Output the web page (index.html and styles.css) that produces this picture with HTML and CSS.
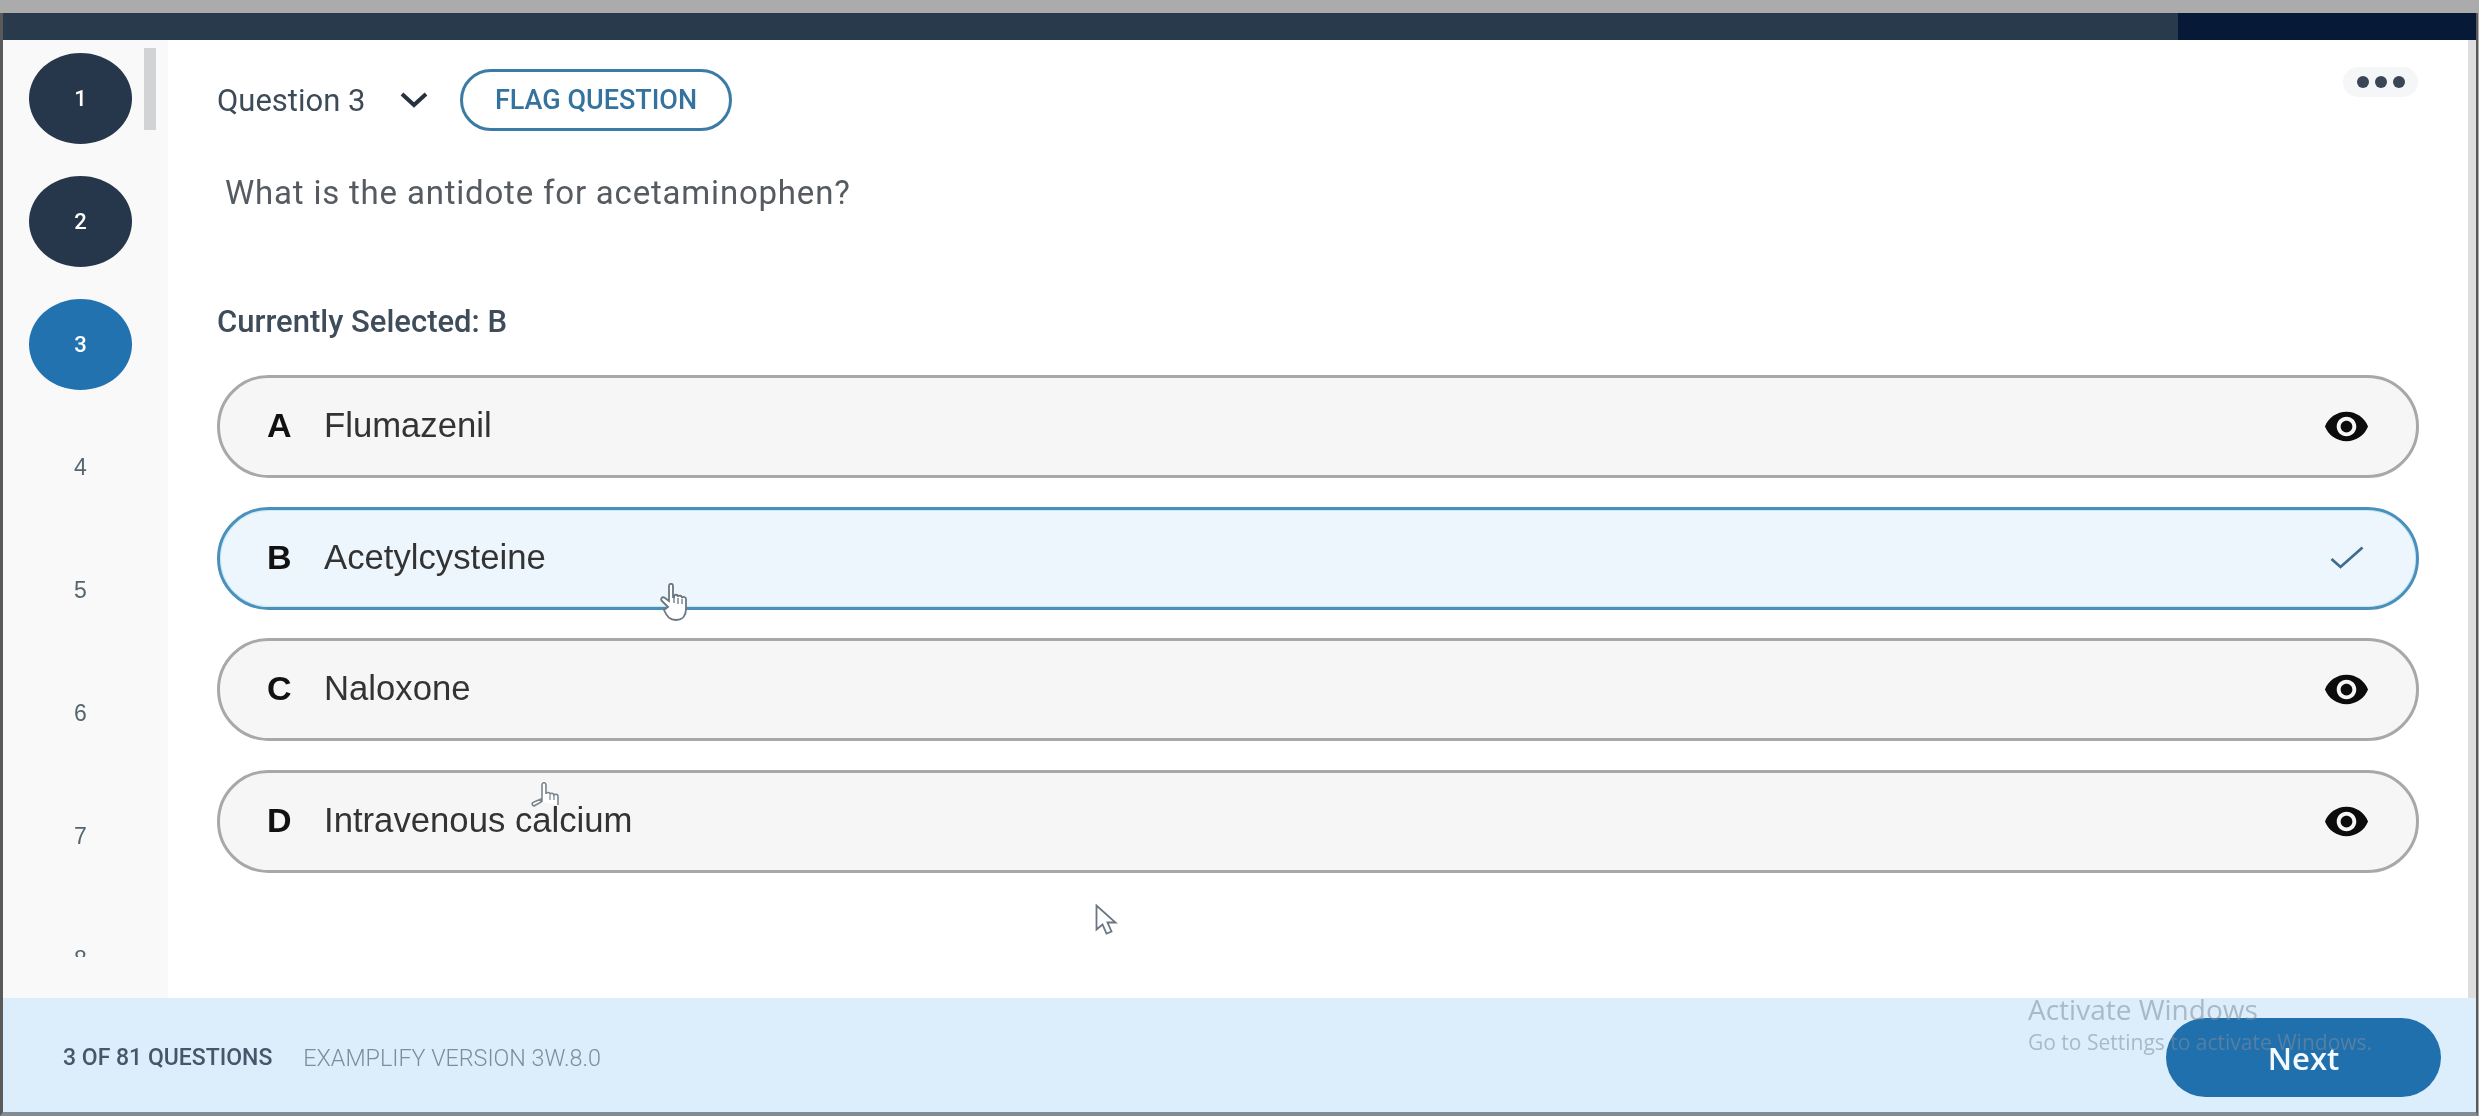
FILE: index.html
```html
<!DOCTYPE html>
<html lang="en">
<head>
    <meta charset="UTF-8">
    <meta name="viewport" content="width=device-width, initial-scale=1.0">
    <title>Examplify</title>
    <link rel="stylesheet" href="styles.css">
</head>
<body>
    <div class="window">
        <div class="top-bar"><div class="top-bar-end"></div></div>
        <div class="main">
            <aside class="sidebar">
                <div class="scroll-thumb"></div>
                <ul class="question-nav">
                    <li class="nav-item done"><span>1</span></li>
                    <li class="nav-item done"><span>2</span></li>
                    <li class="nav-item current"><span>3</span></li>
                    <li class="nav-item"><span>4</span></li>
                    <li class="nav-item"><span>5</span></li>
                    <li class="nav-item"><span>6</span></li>
                    <li class="nav-item"><span>7</span></li>
                    <li class="nav-item"><span>8</span></li>
                </ul>
            </aside>
            <main class="content">
                <div class="question-head">
                    <span class="question-label">Question 3</span>
                    <svg class="chevron" viewBox="0 0 28 16"><path d="M2 2l12 11L26 2" fill="none" stroke="#26323f" stroke-width="4"/></svg>
                    <button class="flag-button">FLAG QUESTION</button>
                    <button class="more-button"><i></i><i></i><i></i></button>
                </div>
                <p class="question-text">What is the antidote for acetaminophen?</p>
                <p class="selected-text">Currently Selected: B</p>
                <div class="options">
                    <div class="option">
                        <span class="option-letter">A</span>
                        <span class="option-text">Flumazenil</span>
                        <svg class="eye" viewBox="0 0 24 24"><path d="M12 4.5C7 4.5 2.73 7.61 1 12c1.73 4.39 6 7.5 11 7.5s9.27-3.11 11-7.5c-1.73-4.39-6-7.5-11-7.5zM12 17c-2.76 0-5-2.24-5-5s2.24-5 5-5 5 2.24 5 5-2.24 5-5 5zm0-8c-1.66 0-3 1.34-3 3s1.34 3 3 3 3-1.34 3-3-1.34-3-3-3z"/></svg>
                    </div>
                    <div class="option selected">
                        <span class="option-letter">B</span>
                        <span class="option-text">Acetylcysteine</span>
                        <svg class="check" viewBox="0 0 34 23"><path d="M1.5 13l9 8L32.500 1.500" fill="none" stroke="#3d6e90" stroke-width="2.800"/></svg>
                    </div>
                    <div class="option">
                        <span class="option-letter">C</span>
                        <span class="option-text">Naloxone</span>
                        <svg class="eye" viewBox="0 0 24 24"><path d="M12 4.5C7 4.5 2.73 7.61 1 12c1.73 4.39 6 7.5 11 7.5s9.27-3.11 11-7.5c-1.73-4.39-6-7.5-11-7.5zM12 17c-2.76 0-5-2.24-5-5s2.24-5 5-5 5 2.24 5 5-2.24 5-5 5zm0-8c-1.66 0-3 1.34-3 3s1.34 3 3 3 3-1.34 3-3-1.34-3-3-3z"/></svg>
                    </div>
                    <div class="option">
                        <span class="option-letter">D</span>
                        <span class="option-text">Intravenous calcium</span>
                        <svg class="eye" viewBox="0 0 24 24"><path d="M12 4.5C7 4.5 2.73 7.61 1 12c1.73 4.39 6 7.5 11 7.5s9.27-3.11 11-7.5c-1.73-4.39-6-7.5-11-7.5zM12 17c-2.76 0-5-2.24-5-5s2.24-5 5-5 5 2.24 5 5-2.24 5-5 5zm0-8c-1.66 0-3 1.34-3 3s1.34 3 3 3 3-1.34 3-3-1.34-3-3-3z"/></svg>
                    </div>
                </div>
            </main>
            <div class="page-scrollbar"></div>
        </div>
        <footer class="footer">
            <span class="footer-count">3 OF 81 QUESTIONS</span>
            <span class="footer-version">EXAMPLIFY VERSION 3W.8.0</span>
            <button class="next-button">Next</button>
            <div class="watermark">
                <div class="watermark-title">Activate Windows</div>
                <div class="watermark-sub">Go to Settings to activate Windows.</div>
            </div>
        </footer>

        <!-- mouse pointers caught in the screen recording -->
        <svg class="cursor hand-one" viewBox="0 0 32 38"><path d="M9 24L3 18c-2-2 0-5 3-3l4 3V3c0-3 4-3 4 0v11l1 0c0-3 4-3 4 0c0-2 4-2 4 1c1-2 4-1 4 1v10c0 6-3 11-10 11c-6 0-9-3-12-10z" fill="#fff" stroke="#6b7680" stroke-width="1.800"/><path d="M15 14v6M19 15v6M23 16v5" stroke="#6b7680" stroke-width="1.300"/></svg>
        <svg class="cursor hand-two" viewBox="0 0 33 26"><path d="M11 17L4 20c-3 1-2 3 0 4l7-4zM12 20V3c0-3 4-3 4 0v9c0-2 4-2 4 0c0-1 4-1 4 1c1-1 4-1 4 1v9" fill="#fff" stroke="#7b858e" stroke-width="1.600"/><path d="M20 12v6M24 13v5" stroke="#7b858e" stroke-width="1.200"/></svg>
        <svg class="cursor arrow" viewBox="0 0 23 31"><path d="M1.500 1.500v24l6-5 4 9 5-2-4-9h8z" fill="#fff" stroke="#6b7680" stroke-width="1.800"/></svg>
    </div>
</body>
</html>
```

FILE: styles.css
```css
* {
    box-sizing: border-box;
}

body {
    margin: 0;
    height: 1116px;
    padding: 13px 1px 0 0;
    overflow: hidden;
    background-color: #ababab;
    font-family: 'Roboto', sans-serif;
}

.window {
    position: relative;
    display: flex;
    flex-direction: column;
    height: 1103px;
    background-color: #ffffff;
    border-left: 3px solid #5a5a5a;
    border-right: 2px solid #5a5a5a;
    border-bottom: 4px solid #7f8c96;
    filter: blur(0.7px);
}

.top-bar {
    display: flex;
    justify-content: flex-end;
    height: 27px;
    background-color: #2a3a4d;
}

.top-bar-end {
    width: 298px;
    background-color: #061a38;
}

.main {
    flex: 1;
    display: flex;
    min-height: 0;
}

/* left question list */
.sidebar {
    position: relative;
    width: 165px;
    padding-top: 13px;
    background-color: #f9f9fa;
}

.scroll-thumb {
    position: absolute;
    top: 8px;
    left: 141px;
    width: 12px;
    height: 82px;
    background-color: #d2d3d5;
}

.question-nav {
    list-style: none;
    display: flex;
    flex-direction: column;
    gap: 32px;
    height: 904px;
    margin: 0;
    padding: 0 0 0 26px;
    overflow: hidden;
}

.nav-item {
    flex: none;
    display: flex;
    align-items: center;
    justify-content: center;
    width: 103px;
    height: 91px;
    border-radius: 50%;
    color: #56666f;
    font-family: 'Liberation Sans', Arial, sans-serif;
    font-size: 23px;
}

.nav-item.done {
    background-color: #26374b;
    color: #ffffff;
    font-family: 'Roboto', sans-serif;
    font-size: 22px;
    font-weight: 500;
}

.nav-item.current {
    background-color: #2272b0;
    color: #ffffff;
    font-family: 'Roboto', sans-serif;
    font-size: 22px;
    font-weight: 500;
}

/* question area */
.content {
    flex: 1;
    padding: 29px 49px 0;
}

.question-head {
    display: flex;
    align-items: center;
    height: 62px;
}

.question-label {
    width: 183px;
    color: #3d4a57;
    font-size: 31px;
}

.chevron {
    width: 28px;
    height: 16px;
}

.flag-button {
    width: 272px;
    height: 62px;
    margin-left: 32px;
    padding: 0;
    background-color: #ffffff;
    border: 3px solid #3b7ba5;
    border-radius: 31px;
    color: #35739f;
    font-family: 'Roboto', sans-serif;
    font-size: 27px;
    font-weight: 500;
}

.more-button {
    display: flex;
    align-items: center;
    justify-content: center;
    gap: 6px;
    width: 75px;
    height: 30px;
    margin: -37px 1px 0 auto;
    padding: 0;
    background-color: #f5f6f8;
    border: none;
    border-radius: 15px;
}

.more-button i {
    width: 12px;
    height: 12px;
    background-color: #3a4655;
    border-radius: 50%;
}

.question-text {
    height: 34px;
    margin: 45px 0 0 8px;
    color: #555b60;
    font-size: 33px;
    line-height: 34px;
    letter-spacing: 0.8px;
}

.selected-text {
    height: 34px;
    margin: 95px 0 0;
    color: #3f4d5a;
    font-size: 31px;
    font-weight: 500;
    line-height: 34px;
}

.options {
    display: flex;
    flex-direction: column;
    gap: 28.5px;
    margin-top: 36px;
}

.option {
    display: flex;
    align-items: center;
    height: 103px;
    padding: 0 46px 2px 47px;
    background-color: #f6f6f6;
    border: 3px solid #a8a8a8;
    border-radius: 52px;
    font-family: 'Liberation Sans', Arial, sans-serif;
}

.option.selected {
    background-color: #eef6fd;
    border-color: #4b90bb;
    box-shadow: inset 0 0 0 1px #c4e8f8;
}

.option-letter {
    width: 57px;
    color: #111111;
    font-size: 34px;
    font-weight: bold;
}

.option-text {
    flex: 1;
    color: #333333;
    font-size: 34.7px;
}

.eye {
    width: 47px;
    height: 47px;
    margin-top: 2px;
    fill: #0c0c0c;
}

.check {
    width: 34px;
    height: 23px;
    margin-right: 6px;
}

.page-scrollbar {
    width: 8px;
    background-color: #dedede;
}

/* bottom bar */
.footer {
    position: relative;
    display: flex;
    align-items: center;
    height: 114px;
    padding: 5px 35px 0 60px;
    background-color: #dcedfc;
}

.footer-count {
    color: #44586a;
    font-size: 23px;
    font-weight: 500;
}

.footer-version {
    margin-left: 31px;
    color: #7f8d9a;
    font-size: 23.300px;
    font-weight: 300;
}

.next-button {
    width: 275px;
    height: 79px;
    margin-left: auto;
    padding: 0;
    background-color: #1f70ad;
    border: none;
    border-radius: 40px;
    color: #f4f9fc;
    font-family: 'Open Sans', sans-serif;
    font-size: 31px;
    font-weight: 600;
}

.watermark {
    position: absolute;
    top: -8px;
    left: 2025px;
    color: rgba(130, 140, 155, 0.55);
    font-family: 'Open Sans', sans-serif;
    white-space: nowrap;
}

.watermark-title {
    font-size: 28px;
    line-height: 38px;
}

.watermark-sub {
    font-size: 21px;
    line-height: 28px;
}

.cursor {
    position: absolute;
}

.hand-one {
    top: 570px;
    left: 656px;
    width: 32px;
    height: 38px;
}

.hand-two {
    top: 769px;
    left: 527px;
    width: 33px;
    height: 26px;
}

.arrow {
    top: 891px;
    left: 1092px;
    width: 23px;
    height: 31px;
}
```
